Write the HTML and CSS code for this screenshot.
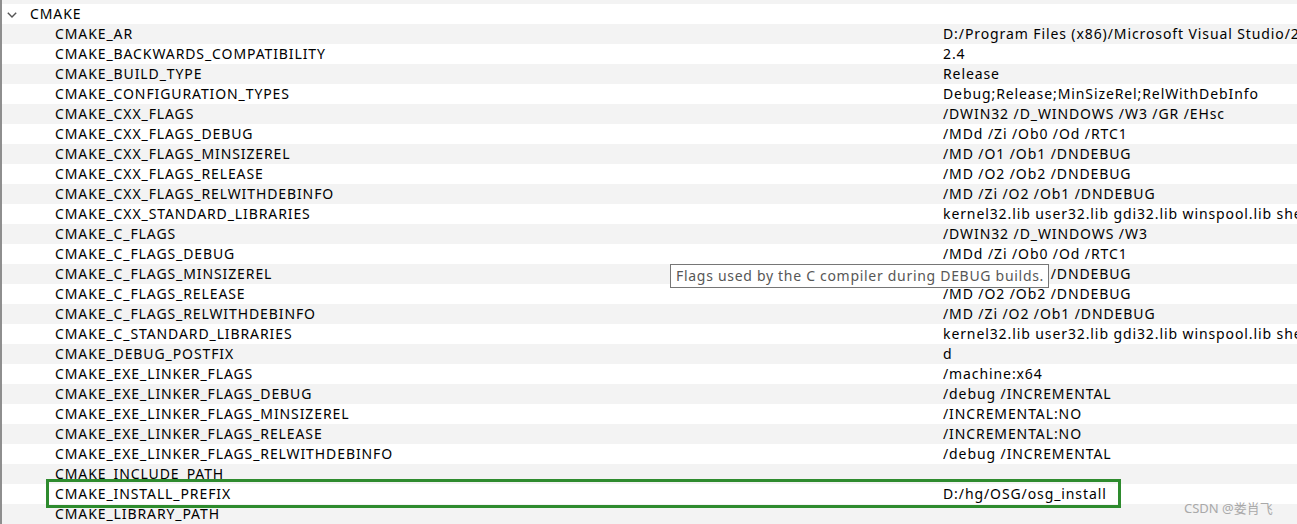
FILE: index.html
```html
<!DOCTYPE html>
<html>
<head>
<meta charset="utf-8">
<link rel="stylesheet" href="styles.css">
</head>
<body>
<div class="tree">
  <div class="strip"></div>
  <div class="group">
    <svg class="chev" width="10" height="6" viewBox="0 0 10 6"><path d="M0.8 0.8 L5 5 L9.2 0.8" fill="none" stroke="#555" stroke-width="1.4"/></svg>
    <span>CMAKE</span>
  </div>
  <div class="row"><span class="name">CMAKE_AR</span><span class="val">D:/Program Files (x86)/Microsoft Visual Studio/2019/Community/VC/Tools/MSVC/14.29.30133/bin/Hostx64/x64/lib.exe</span></div>
  <div class="row"><span class="name">CMAKE_BACKWARDS_COMPATIBILITY</span><span class="val">2.4</span></div>
  <div class="row"><span class="name">CMAKE_BUILD_TYPE</span><span class="val">Release</span></div>
  <div class="row"><span class="name">CMAKE_CONFIGURATION_TYPES</span><span class="val">Debug;Release;MinSizeRel;RelWithDebInfo</span></div>
  <div class="row"><span class="name">CMAKE_CXX_FLAGS</span><span class="val">/DWIN32 /D_WINDOWS /W3 /GR /EHsc</span></div>
  <div class="row"><span class="name">CMAKE_CXX_FLAGS_DEBUG</span><span class="val">/MDd /Zi /Ob0 /Od /RTC1</span></div>
  <div class="row"><span class="name">CMAKE_CXX_FLAGS_MINSIZEREL</span><span class="val">/MD /O1 /Ob1 /DNDEBUG</span></div>
  <div class="row"><span class="name">CMAKE_CXX_FLAGS_RELEASE</span><span class="val">/MD /O2 /Ob2 /DNDEBUG</span></div>
  <div class="row"><span class="name">CMAKE_CXX_FLAGS_RELWITHDEBINFO</span><span class="val">/MD /Zi /O2 /Ob1 /DNDEBUG</span></div>
  <div class="row"><span class="name">CMAKE_CXX_STANDARD_LIBRARIES</span><span class="val">kernel32.lib user32.lib gdi32.lib winspool.lib shell32.lib ole32.lib oleaut32.lib uuid.lib comdlg32.lib advapi32.lib</span></div>
  <div class="row"><span class="name">CMAKE_C_FLAGS</span><span class="val">/DWIN32 /D_WINDOWS /W3</span></div>
  <div class="row"><span class="name">CMAKE_C_FLAGS_DEBUG</span><span class="val">/MDd /Zi /Ob0 /Od /RTC1</span></div>
  <div class="row"><span class="name">CMAKE_C_FLAGS_MINSIZEREL</span><span class="val">/MD /O1 /Ob1 /DNDEBUG</span></div>
  <div class="row"><span class="name">CMAKE_C_FLAGS_RELEASE</span><span class="val">/MD /O2 /Ob2 /DNDEBUG</span></div>
  <div class="row"><span class="name">CMAKE_C_FLAGS_RELWITHDEBINFO</span><span class="val">/MD /Zi /O2 /Ob1 /DNDEBUG</span></div>
  <div class="row"><span class="name">CMAKE_C_STANDARD_LIBRARIES</span><span class="val">kernel32.lib user32.lib gdi32.lib winspool.lib shell32.lib ole32.lib oleaut32.lib uuid.lib comdlg32.lib advapi32.lib</span></div>
  <div class="row"><span class="name">CMAKE_DEBUG_POSTFIX</span><span class="val">d</span></div>
  <div class="row"><span class="name">CMAKE_EXE_LINKER_FLAGS</span><span class="val">/machine:x64</span></div>
  <div class="row"><span class="name">CMAKE_EXE_LINKER_FLAGS_DEBUG</span><span class="val">/debug /INCREMENTAL</span></div>
  <div class="row"><span class="name">CMAKE_EXE_LINKER_FLAGS_MINSIZEREL</span><span class="val">/INCREMENTAL:NO</span></div>
  <div class="row"><span class="name">CMAKE_EXE_LINKER_FLAGS_RELEASE</span><span class="val">/INCREMENTAL:NO</span></div>
  <div class="row"><span class="name">CMAKE_EXE_LINKER_FLAGS_RELWITHDEBINFO</span><span class="val">/debug /INCREMENTAL</span></div>
  <div class="row"><span class="name">CMAKE_INCLUDE_PATH</span><span class="val"></span></div>
  <div class="row marked"><span class="name">CMAKE_INSTALL_PREFIX</span><span class="val">D:/hg/OSG/osg_install</span><span class="highlight"></span></div>
  <div class="row"><span class="name">CMAKE_LIBRARY_PATH</span><span class="val"></span></div>
  <div class="tooltip">Flags used by the C compiler during DEBUG builds.</div>
  <div class="watermark">CSDN @娄肖飞</div>
</div>
</body>
</html>
```

FILE: styles.css
```css
html, body {
  margin: 0;
  padding: 0;
  background: #ffffff;
  overflow: hidden;
}
body {
  width: 1297px;
  height: 524px;
  font-family: "Noto Sans", "Noto Sans CJK SC", sans-serif;
  font-size: 14px;
  color: #000;
}
.tree {
  position: relative;
  height: 524px;
  border-left: 2px solid #8e8e8e;
  overflow: hidden;
  letter-spacing: 0.9px;
}
.strip {
  height: 4px;
  background: #f3f3f3;
}
.group {
  height: 20px;
  display: flex;
  align-items: center;
  line-height: 20px;
  background: #fff;
}
.chev {
  margin-left: 5px;
  margin-right: 13px;
  margin-top: 1px;
}
.row {
  position: relative;
  height: 20px;
  line-height: 20px;
  display: grid;
  grid-template-columns: 888px 1fr;
  padding-left: 53px;
  white-space: nowrap;
}
.row:nth-child(odd) {
  background: #f3f3f3;
}
.name, .val {
  overflow: hidden;
}
.highlight {
  position: absolute;
  z-index: 2;
  left: 44px;
  top: -5px;
  width: 1069px;
  height: 23px;
  border: 3px solid #2e8b2e;
  pointer-events: none;
}
.tooltip {
  position: absolute;
  z-index: 3;
  left: 668px;
  top: 264px;
  width: 367px;
  height: 22px;
  line-height: 21px;
  padding: 0 5px;
  background: #fff;
  border: 1px solid #767676;
  color: #575757;
  white-space: nowrap;
  letter-spacing: 0.7px;
}
.watermark {
  position: absolute;
  z-index: 3;
  left: 1182px;
  top: 498px;
  color: #a9a9a9;
  font-size: 13px;
  line-height: 20px;
  letter-spacing: 0;
}
```
